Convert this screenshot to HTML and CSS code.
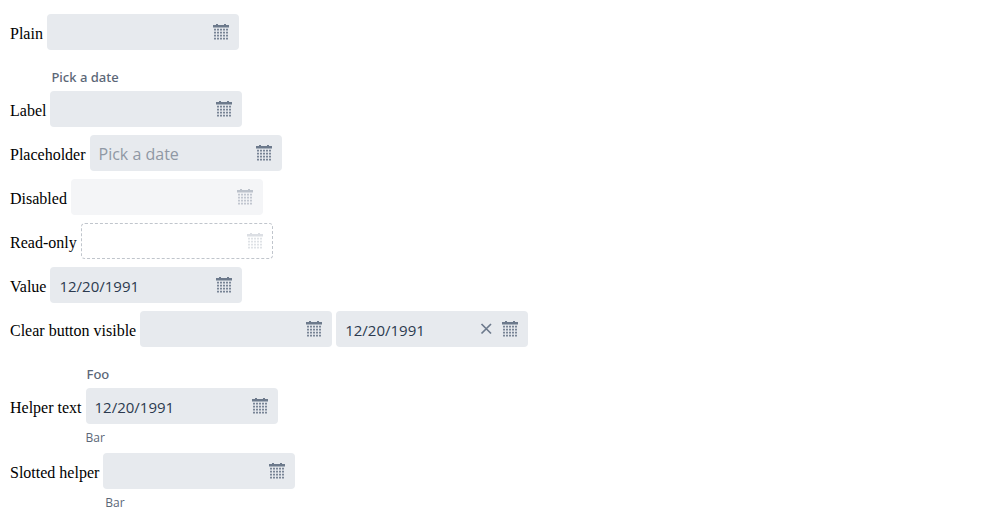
FILE: index.html
```
<!DOCTYPE html>
<html lang="en">
<head>
<meta charset="utf-8">
<title>Date picker</title>
<link rel="stylesheet" href="styles.css">
</head>
<body>
<svg class="sprite" aria-hidden="true">
  <symbol id="calendar" viewBox="0 0 16 18">
    <path d="M3 1h2v1h6V1h2v1h3v2.4H0V2h3z"/>
    <path d="M2 5.8v11M5 5.8v11M8 5.8v11M11 5.8v11M14 5.8v11" fill="none" stroke="currentColor" stroke-width="1.8" stroke-dasharray="1.8 1.2"/>
  </symbol>
  <symbol id="cross" viewBox="0 0 12 12">
    <path d="M1.5 1l9.5 9.5M11 1L1.500 10.5" fill="none" stroke="currentColor" stroke-width="1.7"/>
  </symbol>
</svg>
<main class="page">
  <div class="row">
    <span class="name" id="n1">Plain</span>
    <div class="field"><input type="text" class="value" aria-labelledby="n1"><button class="icon" aria-label="Calendar"><svg class="calendar"><use href="#calendar"/></svg></button></div>
  </div>
  <div class="row">
    <label class="label" for="f2">Pick a date</label>
    <span class="name">Label</span>
    <div class="field"><input type="text" class="value" id="f2"><button class="icon" aria-label="Calendar"><svg class="calendar"><use href="#calendar"/></svg></button></div>
  </div>
  <div class="row">
    <span class="name" id="n3">Placeholder</span>
    <div class="field"><input type="text" class="value hinted" placeholder="Pick a date" aria-labelledby="n3"><button class="icon" aria-label="Calendar"><svg class="calendar"><use href="#calendar"/></svg></button></div>
  </div>
  <div class="row">
    <span class="name" id="n4">Disabled</span>
    <div class="field disabled"><input type="text" class="value" disabled aria-labelledby="n4"><button class="icon" disabled aria-label="Calendar"><svg class="calendar"><use href="#calendar"/></svg></button></div>
  </div>
  <div class="row">
    <span class="name" id="n5">Read-only</span>
    <div class="field readonly"><input type="text" class="value" readonly aria-labelledby="n5"><button class="icon" disabled aria-label="Calendar"><svg class="calendar"><use href="#calendar"/></svg></button></div>
  </div>
  <div class="row">
    <span class="name" id="n6">Value</span>
    <div class="field"><input type="text" class="value" value="12/20/1991" aria-labelledby="n6"><button class="icon" aria-label="Calendar"><svg class="calendar"><use href="#calendar"/></svg></button></div>
  </div>
  <div class="row">
    <span class="name" id="n7">Clear button visible</span>
    <div class="field"><input type="text" class="value" aria-labelledby="n7"><button class="icon" aria-label="Calendar"><svg class="calendar"><use href="#calendar"/></svg></button></div>
    <div class="field"><input type="text" class="value" value="12/20/1991" aria-labelledby="n7"><button class="icon" aria-label="Clear"><svg class="cross"><use href="#cross"/></svg></button><button class="icon" aria-label="Calendar"><svg class="calendar"><use href="#calendar"/></svg></button></div>
  </div>
  <div class="row">
    <label class="label" for="f8">Foo</label>
    <span class="name">Helper text</span>
    <div class="field"><input type="text" class="value" id="f8" value="12/20/1991" aria-describedby="h8"><button class="icon" aria-label="Calendar"><svg class="calendar"><use href="#calendar"/></svg></button></div>
    <div class="helper" id="h8">Bar</div>
  </div>
  <div class="row">
    <span class="name" id="n9">Slotted helper</span>
    <div class="field"><input type="text" class="value" aria-labelledby="n9" aria-describedby="h9"><button class="icon" aria-label="Calendar"><svg class="calendar"><use href="#calendar"/></svg></button></div>
    <div class="helper slotted" id="h9">Bar</div>
  </div>
</main>
</body>
</html>
```
FILE: styles.css
```
* { box-sizing: border-box; }
body { margin: 0; background: #fff; color: #000; font: 16px/18px "Liberation Serif", serif; }
.sprite { display: none; }
.page { padding: 10px; }
.row {
  display: grid;
  grid-template-columns: auto 192px 192px;
  column-gap: 4px;
  justify-content: start;
  align-items: baseline;
  padding: 4px 0;
}
.name { grid-column: 1; grid-row: 2; }
.field {
  grid-row: 2;
  display: flex;
  height: 36px;
  padding: 0 6px 0 9px;
  border-radius: 4px;
  background: #e7eaee;
  color: #6d7a8c;
}
.value {
  flex: 1;
  min-width: 0;
  height: 36px;
  padding: 1px 0 0;
  border: 0;
  outline: 0;
  background: none;
  color: #2c3a4f;
  font: 500 15px "Open Sans", sans-serif;
}
.hinted { font-size: 16px; }
.value::placeholder { color: #8f98a4; opacity: 1; }
.icon {
  display: flex;
  justify-content: center;
  align-items: center;
  width: 24px;
  height: 36px;
  padding: 0;
  border: 0;
  background: none;
  color: inherit;
}
.calendar { width: 16px; height: 18px; fill: currentColor; }
.cross { width: 12px; height: 12px; }
.disabled { background: #f4f5f7; color: #bcc2cb; }
.readonly {
  border: 1px dashed #c0c5cc;
  padding: 0 5px 0 8px;
  background: #fff;
  color: #dcdfe4;
}
.readonly .value, .readonly .icon { height: 34px; }
.label {
  grid-column: 2;
  grid-row: 1;
  padding: 10px 0 5px 1px;
  color: #5b6777;
  font: 500 13px/18px "Noto Sans", "Open Sans", sans-serif;
}
.helper {
  grid-column: 2;
  grid-row: 3;
  padding: 6px 0 0;
  color: #5b6777;
  font: 12px/15px "Open Sans", sans-serif;
}
.slotted { padding-left: 2px; }
```
